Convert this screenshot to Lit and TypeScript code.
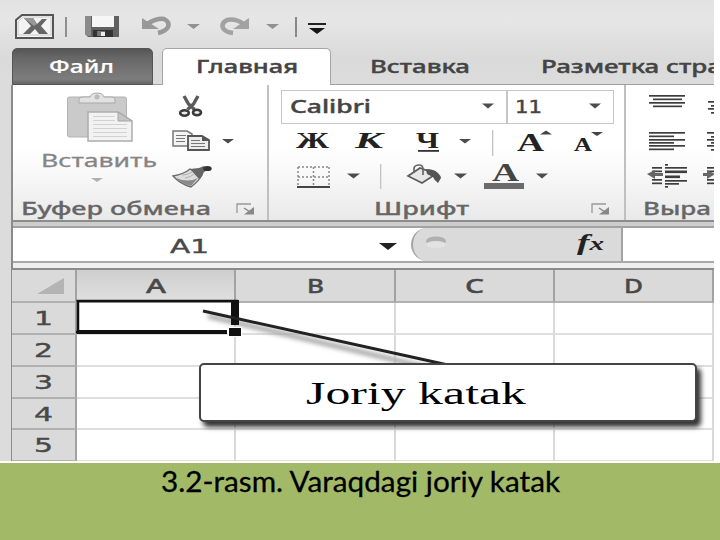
import { LitElement, html, svg, css } from "lit";
import { customElement } from "lit/decorators.js";

// A drawing fragment whose viewBox shares the coordinates of the whole sheet.
const art = (x: number, y: number, w: number, h: number, body: unknown) =>
  html`<svg width=${w} height=${h} viewBox="${x} ${y} ${w} ${h}">${body}</svg>`;

// A word stretched to an exact width.
const word = (text: string, w: number, h: number, base: number, cls = "ui") =>
  html`<svg class="word" width=${w} height=${h}><text class=${cls} x="0" y=${base} textLength=${w} lengthAdjust="spacingAndGlyphs">${text}</text></svg>`;

const down = (x: number, y: number, w = 13, h = 5, fill = "#4c4c4c") =>
  svg`<path d="M${x} ${y}h${w}l${-w / 2} ${h}z" fill=${fill}/>`;

const bars = (list: number[][], fill = "#3d3d3d") =>
  list.map(([x, y, w, h = 1.7]) => svg`<rect x=${x} y=${y} width=${w} height=${h} fill=${fill}/>`);

const launcher = (x: number, y: number) => html`<svg class="word" width="19" height="12" viewBox="${x} ${y} 19 12">
  <path d="M${x + 1} ${y + 10}V${y + 1}H${x + 15}" fill="none" stroke="#999" stroke-width="1.300"/>
  <path d="M${x + 8} ${y + 5}l6 4" stroke="#888" stroke-width="1.500"/>
  <path d="M${x + 18} ${y + 4}v7.500h-10z" fill="#888"/></svg>`;

@customElement("app-root")
export class AppRoot extends LitElement {
  static styles = css`
    :host { display: block; width: 720px; height: 540px; overflow: hidden; background: #fff; }
    * { box-sizing: border-box; }
    svg { display: block; flex: none; overflow: hidden; }
    .word { overflow: visible; }
    text { font-family: "Noto Sans", "Open Sans", sans-serif; font-size: 18px; fill: #444; }
    .ui { font-weight: 500; stroke: #444; stroke-width: .4px; }
    .light { fill: #fff; font-weight: 500; stroke: #fff; stroke-width: .2px; }
    .dim { fill: #858585; font-size: 18.500px; stroke: #858585; stroke-width: .3px; }
    .group-name { fill: #666; font-weight: 500; font-size: 18px; stroke: #666; stroke-width: .3px; }
    .head { font-size: 20px; fill: #484848; font-weight: 500; stroke: #484848; stroke-width: .4px; }
    .digit { font-family: "DejaVu Sans", sans-serif; font-size: 19.500px; fill: #484848; stroke: #484848; stroke-width: .4px; }
    .size-text { font-family: "DejaVu Sans", sans-serif; font-size: 18px; fill: #444; stroke: #444; stroke-width: .5px; }
    .serif { font-family: "Liberation Serif", serif; font-weight: 700; font-size: 23px; fill: #222; }
    .big { font-size: 26px; }
    .color { font-size: 25px; fill: #444; }
    .small { font-size: 18px; }
    .tail { font-size: 18px; }
    .callout-text { font-family: "Liberation Serif", serif; font-size: 32px; fill: #000; }
    .caption-text { font-family: Lato, sans-serif; font-size: 29px; fill: #000; stroke: #000; stroke-width: .3px; }

    .window { width: 714px; height: 461px; display: flex; flex-direction: column; overflow: hidden;
      background: linear-gradient(#e2e2e2, #e6e6e6 20px, #dadada 58px, #dcdcdc 85px); position: relative; }
    .quick { height: 47px; flex: none; padding: 13px 0 0 15px; display: grid; align-items: start;
      grid-template-columns: 50px 19px 57px 46px 32px 47px 28px 30px; }
    .tabs { height: 38px; flex: none; display: flex; border-bottom: 1px solid #a0a0a0; margin-left: 12px; }
    .tab { padding-top: 8px; flex: none; }
    .file { width: 141px; margin-top: 1px; height: 37px; padding: 7px 0 0 36px; border-radius: 5px 5px 0 0;
      background: linear-gradient(#555, #666 8px, #7d7d7d 30px, #666); border: 1px solid #555; }
    .home { width: 169px; height: 38px; margin: 1px 0 0 9px; padding: 6px 0 0 33px; background: #fff;
      border: 1px solid #a6a6a6; border-bottom: 0; border-radius: 5px 5px 0 0; }
    .insert { margin-left: 39px; }
    .layout { margin-left: 71px; }

    .lower { flex: 1; margin-left: 11px; border-left: 2px solid #8b8b8b; display: flex; flex-direction: column; }
    .ribbon { height: 137px; flex: none; display: flex; background: linear-gradient(#fff 45%, #fafafa 62%, #e9e9e9); border-bottom: 2px solid #8c8c8c; }
    .group { display: flex; flex-direction: column; justify-content: space-between; border-right: 2px solid #c0c0c0; }
    .clip { width: 256px; }
    .font { width: 357px; }
    .align { flex: 1; border-right: 0; overflow: hidden; }
    .clip-body { display: flex; padding: 7px 0 0 28px; }
    .paste { width: 129px; display: flex; flex-direction: column; }
    .paste-icon { padding-left: 25px; height: 55px; }
    .paste-arrow { padding: 7px 0 0 50px; }
    .foot { height: 26px; display: flex; flex: none; padding-left: 8px; }
    .foot-font { padding-left: 105px; }
    .foot-align { padding-left: 17px; }
    .launch { margin: 9px 0 0 25px; }
    .launch-font { margin-left: 122px; }
    .boxes { display: flex; padding: 5px 0 0 12px; }
    .box { height: 34px; border: 1.500px solid #c6c6c6; background: #fff; display: flex; justify-content: space-between; padding: 7px 11px 0 8px; }
    .family { width: 226px; }
    .size { width: 107px; padding-left: 7px; }
    .font-body { display: flex; flex-direction: column; }
    .tools { display: grid; height: 35px; grid-template-columns: 59px 61px 39px 62px 57px 45px; padding-left: 27px; }
    .tools2 { grid-template-columns: 84px 25px 79px 80px; }

    .strip { height: 6px; flex: none; background: #cdcdcd; border-bottom: 2px solid #a2a2a2; }
    .formula { height: 35px; flex: none; display: flex; background: #fff; border-bottom: 2px solid #a9a9a9; }
    .name { width: 398px; padding: 8px 0 0 157px; display: flex; }
    .name-arrow { margin: 7px 0 0 170px; }
    .fx { width: 212px; height: 33px; border: 2px solid #a3a3a3; border-top: 0; border-bottom: 0; border-radius: 21px 0 0 21px; background: #dadada;
      display: flex; padding: 2px 16px 0 12px; justify-content: space-between; }
    .space { height: 5px; flex: none; background: #efefef; }
    .grid { flex: none; display: grid; grid-template-columns: 65px 159px 160px 159px 159px; grid-template-rows: 33px 32px 32px 32px 31px 32px;
      border-top: 2px solid #8b8b8b; margin-left: -1px; background: #fff; width: 702px; }
    .cell { border-right: 2px solid #d9d9d9; border-bottom: 2px solid #dedede; }
    .label { border-right: 2px solid #a2a2a2; border-bottom: 2px solid #b0b0b0; background: #dadada; display: flex; justify-content: center; }
    .current { background: linear-gradient(#cecece, #e0e0e0); }

    .lead { position: absolute; left: 76px; top: 299px; }
    .callout { position: absolute; left: 199px; top: 363px; width: 498px; height: 59px; background: #fff; border: 2px solid #444;
      border-radius: 5px; box-shadow: 4px 5px 5px #333; padding: 9px 0 0 105px; }
    .rest { height: 2px; background: #fff; }
    .caption { height: 77px; background: #a2ba68; display: flex; justify-content: center; padding-top: 4px; }
  `;

  private quick() {
    return html`<div class="quick">
      ${art(15, 13, 41, 28, svg`
        <path d="M22 15H53V38H16V20Z" fill="#f3f3f3" stroke="#555" stroke-width="2"/>
        <path d="M18 35V22l5-5h28v18z" fill="none" stroke="#ccc"/>
        <path d="M24 18h9l4 6 5-5h5l-6 7 7 8h-9l-4-5-5 5h-7l8-8z" fill="#666"/>
        <path d="M24 18h9l4 6-3 2z" fill="#989898"/>`)}
      ${art(65, 13, 4, 28, bars([[65, 17, 2, 20]], "#8f8f8f"))}
      ${art(84, 13, 37, 28, svg`
        <path d="M85 16H119V37H88l-3-3z" fill="#616161"/><path d="M85 16h6v20h-3l-3-2z" fill="#8b8b8b"/>
        <path d="M92 16h22v11H92z" fill="#f6f6f6"/><path d="M93 30h20v7H93z" fill="#333"/>
        <path d="M97 31h8v5h-8z" fill="#777"/><path d="M101 32h4v4h-4z" fill="#eee"/>`)}
      ${art(141, 13, 32, 28, svg`<path d="M147 24Q157 18 164 19Q170 22 168 27Q166 31 158 33" fill="none" stroke="#999" stroke-width="4.500"/>
        <path d="M142 18v11h17z" fill="#999"/>`)}
      ${art(187, 13, 14, 28, down(187, 24, 13, 5, "#919191"))}
      ${art(219, 13, 32, 28, svg`<path d="M244 24Q235 18 227 20Q221 23 223 28Q225 32 233 33" fill="none" stroke="#a2a2a2" stroke-width="4.500"/>
        <path d="M249 18v11h-16z" fill="#a2a2a2"/>`)}
      ${art(266, 13, 14, 28, down(266, 24, 13, 5, "#919191"))}
      ${art(295, 13, 33, 28, svg`${bars([[296, 17, 2, 20]], "#888")}${bars([[309, 23, 18, 2]], "#222")}${down(310, 28, 16, 6, "#151515")}`)}
    </div>`;
  }

  private tabs() {
    return html`<div class="tabs">
      <div class="tab file">${word("Файл", 65, 24, 17, "light")}</div>
      <div class="tab home">${word("Главная", 102, 24, 18)}</div>
      <div class="tab insert">${word("Вставка", 100, 24, 18)}</div>
      <div class="tab layout">${word("Разметка стра", 181, 24, 18)}</div>
    </div>`;
  }

  private clipboard() {
    return html`<div class="group clip">
      <div class="clip-body">
        <div class="paste">
          <div class="paste-icon">${art(66, 92, 68, 52, svg`
            <rect x="67.500" y="97" width="59" height="40" rx="2" fill="#cacaca" stroke="#b2b2b2"/>
            <path d="M79 103v-4q0-2 4-2h7q1-4 7-4t7 4h7q4 0 4 2v4z" fill="#e2e2e2" stroke="#a8a8a8"/>
            <circle cx="97" cy="97" r="2.500" fill="#bbb"/>
            <path d="M88 112h30l14 9v20H88z" fill="#f2f2f2" stroke="#adadad" stroke-width="1.500"/>
            <path d="M118 112v9h14z" fill="#c4c4c4" stroke="#a5a5a5"/>
            ${bars([[93, 116, 22, 1], [93, 120, 22, 1], [93, 124, 34, 1], [93, 128, 34, 1], [93, 132, 34, 1], [93, 136, 34, 1]], "#d2d2d2")}`)}</div>
          ${word("Вставить", 116, 24, 20, "dim")}
          <div class="paste-arrow">${art(92, 178, 13, 6, down(92, 178, 12, 4, "#b0b0b0"))}</div>
        </div>
        ${art(170, 92, 68, 98, svg`
          <path d="M184 96l4.500 8 6 5.500M198 96l-4.500 8-6 5.500" fill="none" stroke="#5a5a5a" stroke-width="3.400"/>
          <ellipse cx="184.500" cy="113" rx="4.300" ry="2.800" fill="#eee" stroke="#3a3a3a" stroke-width="2.600"/>
          <ellipse cx="197" cy="112.500" rx="4" ry="2.800" fill="#eee" stroke="#3a3a3a" stroke-width="2.600"/>
          <path d="M173 131h14l5 3v12h-19z" fill="#f4f4f4" stroke="#777" stroke-width="1.500"/>
          <path d="M188 136h14l7 4v10h-21z" fill="#ececec" stroke="#555" stroke-width="1.800"/>
          <path d="M202 136v5h7z" fill="#555"/>
          ${bars([[176, 135, 10, 1], [176, 138, 9, 1], [176, 141, 9, 1], [191, 140, 9, 1], [191, 143, 14, 1], [191, 146, 14, 1]], "#777")}
          ${down(222, 139, 12, 4.500)}
          <path d="M173 176Q184 174 190 169l12 6Q199 181 191 187Q180 184 173 176z" fill="#dcdcdc" stroke="#6b6b6b" stroke-width="1.300"/>
          <path d="M176 178Q188 183 198 178L191 186Q182 184 176 178z" fill="#8a8a8a"/>
          <path d="M182 175q6 0 10-3M185 178q6-1 9-4" fill="none" stroke="#b0b0b0"/>
          <path d="M190 169l9-1 5-2 5 3-5 3-2 4-3 3z" fill="#666"/>
          <ellipse cx="207.500" cy="168.500" rx="4.200" ry="2.600" fill="#333"/>`)}
      </div>
      <div class="foot">${word("Буфер обмена", 190, 26, 21, "group-name")}<div class="launch">${launcher(236, 203)}</div></div>
    </div>`;
  }

  private font() {
    return html`<div class="group font">
      <div class="font-body">
        <div class="boxes">
          <div class="box family">${word("Calibri", 81, 22, 15)}${art(482, 97, 13, 16, down(482, 102.5, 12, 5))}</div>
          <div class="box size">${word("11", 27, 22, 15, "size-text")}${art(590, 97, 13, 16, down(590, 102.5, 12, 5))}</div>
        </div>
        <div class="tools">
          ${word("Ж", 33, 34, 24, "serif")}
          <svg class="word" width="30" height="34"><text class="serif" font-style="italic" x="0" y="24" textLength="28" lengthAdjust="spacingAndGlyphs">К</text></svg>
          <svg class="word" width="27" height="34"><text class="serif" x="0" y="24" textLength="23" lengthAdjust="spacingAndGlyphs">Ч</text><rect x="2" y="26" width="21" height="1.800" fill="#333"/></svg>
          ${art(454, 124, 40, 34, svg`${down(458, 139, 12, 4.5)}${bars([[491, 130, 1.3, 26]], "#c2c2c2")}`)}
          <svg class="word" width="36" height="34"><text class="serif big" x="0" y="27" textLength="27" lengthAdjust="spacingAndGlyphs">A</text><path d="M23 10.500h12l-6-4z" fill="#444"/></svg>
          <svg class="word" width="30" height="34"><text class="serif small" x="0" y="27" textLength="18" lengthAdjust="spacingAndGlyphs">A</text><path d="M17 8h12l-6 4z" fill="#444"/></svg>
        </div>
        <div class="tools tools2">
          ${art(295, 159, 66, 34, svg`
            <path d="M297 167H329M297 177H329M297 167V186M312.500 167V186M328 167V186" stroke="#888" stroke-width="1.500" stroke-dasharray="2 2" fill="none"/>
            ${bars([[296, 186, 33, 2]], "#444")}${down(346, 173.5, 13, 5)}`)}
          ${art(379, 159, 3, 34, bars([[379, 164, 1.3, 25]], "#c2c2c2"))}
          ${art(404, 159, 64, 34, svg`
            <path d="M407 176l12-8 16 6-14 9z" fill="#e7e7e7" stroke="#5a5a5a" stroke-width="1.700"/>
            <path d="M413 173v-5q1-3 5-3t4 4v6" fill="none" stroke="#666" stroke-width="1.700"/>
            <path d="M425 169q8 0 12 4 3 3 3 5l-3 5q-4-3-5-6l-6-3z" fill="#555"/>${down(453, 173.5, 13, 5)}`)}
          <svg class="word" width="66" height="34"><text class="serif color" x="8" y="22" textLength="27" lengthAdjust="spacingAndGlyphs">A</text>
            <rect x="0" y="24" width="40" height="6" fill="#6b6b6b"/><path d="M52 14.500h12l-6 5z" fill="#4c4c4c"/></svg>
        </div>
      </div>
      <div class="foot foot-font">${word("Шрифт", 95, 26, 21, "group-name")}<div class="launch launch-font">${launcher(592, 203)}</div></div>
    </div>`;
  }

  private align() {
    return html`<div class="group align">
      ${art(626, 85, 88, 108, svg`
        ${bars([[649, 95, 36], [653, 98.5, 29], [649, 102, 36], [653, 105.5, 29],
          [649, 132, 36], [649, 135.5, 25], [649, 139, 36], [649, 142, 25], [649, 145, 36], [649, 148.5, 25],
          [708, 101, 6], [711, 105, 3], [708, 108, 6], [711, 112, 3],
          [707, 132, 7], [711, 136, 3], [707, 139, 7], [711, 142, 3], [707, 145, 7], [711, 149, 3],
          [652, 167, 10], [652, 170.5, 10], [652, 179, 10], [652, 182.5, 10], [665, 167, 22], [665, 170.5, 22, 2.6], [665, 175.5, 15, 2.6], [665, 180, 22], [665, 183, 14],
          [665, 164, 3], [665, 186, 3], [707, 167, 7], [707, 170.5, 7], [707, 179, 7], [707, 182.5, 7]])}
        <path d="M647 174l8-4v3h8v3h-8v3zM715 174l-8-4v3h-4v3h4v3z" fill="#666"/>`)}
      <div class="foot foot-align">${word("Выра", 68, 26, 21, "group-name")}</div>
    </div>`;
  }

  private sheet() {
    const heads: [string, number][] = [["A", 20], ["B", 17], ["C", 19], ["D", 19]];
    return html`<div class="grid">
      <div class="label">${art(14, 270, 61, 30, svg`<path d="M38 294H65V278z" fill="#b4b4b4"/>`)}</div>
      ${heads.map(([t, w], i) => html`<div class="label ${i === 0 ? "current" : ""}">${word(t, w, 30, 23, "head")}</div>`)}
      ${[1, 2, 3, 4, 5].map((n) => html`
        <div class="label">${word(String(n), 19, 30, 22, "digit")}</div>
        ${heads.map(() => html`<div class="cell"></div>`)}`)}
    </div>`;
  }

  render() {
    return html`
      <div class="window">
        ${this.quick()}${this.tabs()}
        <div class="lower">
          <div class="ribbon">${this.clipboard()}${this.font()}${this.align()}</div>
          <div class="strip"></div>
          <div class="formula">
            <div class="name">${word("A1", 39, 24, 17, "digit")}<div class="name-arrow">${art(378, 243, 18, 8, down(378, 243, 18, 7, "#222"))}</div></div>
            <div class="fx">
              ${art(424, 232, 26, 28, svg`<ellipse cx="435" cy="243" rx="10" ry="4.500" fill="#b0b0b0"/><ellipse cx="435" cy="246.500" rx="10" ry="3.500" fill="#e2e2e2"/>`)}
              <svg class="word" width="29" height="30"><text class="serif" font-style="italic" x="1" y="20" textLength="27" lengthAdjust="spacingAndGlyphs">f<tspan class="tail">x</tspan></text></svg>
            </div>
          </div>
          <div class="space"></div>
          ${this.sheet()}
        </div>
        <svg class="lead" width="380" height="70" viewBox="76 299 380 70">
          <defs><filter id="soft" x="-10%" y="-30%" width="120%" height="180%"><feGaussianBlur stdDeviation="2"/></filter></defs>
          <path d="M208 316L438 370" stroke="#aaa" stroke-width="5" filter="url(#soft)"/>
          <path d="M76.500 301H238M78 300V334M76 332H226" fill="none" stroke="#111" stroke-width="2.500"/>
          <path d="M77 332H227" stroke="#111" stroke-width="4"/><path d="M235 300V325" stroke="#111" stroke-width="8"/>
          <rect x="228" y="327" width="14" height="10" fill="#fff"/><rect x="229" y="328" width="12" height="8" fill="#111"/>
          <path d="M203 311L448 365" stroke="#222" stroke-width="3"/>
        </svg>
        <div class="callout">${word("Joriy katak", 220, 40, 30, "callout-text")}</div>
      </div>
      <div class="rest"></div>
      <div class="caption">${word("3.2-rasm. Varaqdagi joriy katak", 399, 40, 25, "caption-text")}</div>`;
  }
}
